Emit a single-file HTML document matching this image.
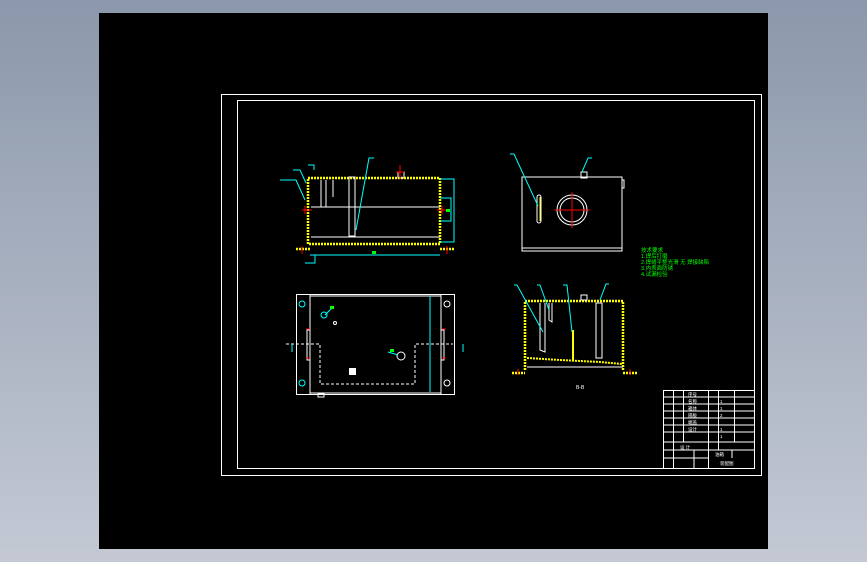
<!DOCTYPE html>
<html><head><meta charset="utf-8"><style>
html,body{margin:0;padding:0;width:867px;height:562px;overflow:hidden;background:linear-gradient(#8b98ab,#c4c9d4);}
svg{position:absolute;left:0;top:0}
text{font-family:"Liberation Sans","Noto Sans CJK SC",sans-serif;}
</style></head><body>
<svg width="867" height="562" viewBox="0 0 867 562">
<rect x="99" y="13" width="669" height="536" fill="#000"/>
<rect x="221.5" y="94.5" width="540" height="381" fill="none" stroke="#fff" stroke-width="1"/>
<rect x="237.5" y="100.5" width="517" height="368" fill="none" stroke="#fff" stroke-width="1"/>

<!-- front view -->
<g fill="none" stroke-width="1">
<rect x="308" y="178" width="132" height="66" stroke="#ff0" stroke-width="2.5" stroke-dasharray="2 1"/>
<line x1="296" y1="249" x2="310" y2="249" stroke="#ff0" stroke-width="2.5" stroke-dasharray="2 1"/>
<line x1="440" y1="249" x2="455" y2="249" stroke="#ff0" stroke-width="2.5" stroke-dasharray="2 1"/>
<line x1="311" y1="207" x2="440" y2="207" stroke="#fff"/>
<line x1="311" y1="237" x2="440" y2="237" stroke="#fff"/>
<rect x="349" y="177" width="6" height="59" stroke="#fff"/>
<line x1="321" y1="180" x2="321" y2="207" stroke="#fff"/><line x1="326" y1="180" x2="326" y2="207" stroke="#fff"/>
<line x1="333" y1="180" x2="333" y2="197" stroke="#fff"/>
<rect x="398" y="172" width="6" height="6" stroke="#fff"/>
<polyline points="440,179 454,179 454,242 440,242" stroke="#0ff"/>
<polyline points="440,198 451,198 451,221 440,221" stroke="#0ff"/>
<line x1="310" y1="255" x2="440" y2="255" stroke="#0ff"/>
<polyline points="315,255 315,263 305,263" stroke="#0ff"/>
<polyline points="280,180 296,180 305,200" stroke="#0ff"/>
<polyline points="293,170 300,170 306,183" stroke="#0ff"/>
<polyline points="374,158 369,158 356,230" stroke="#0ff"/>
<polyline points="308,165 314,165 314,170" stroke="#0ff"/>
<path d="M302 210h10M305 206v8M437 210h10M442 206v8M400 165v14M396 172h8M302 246v8M447 246v8" stroke="#f00"/>
<rect x="446" y="209" width="4" height="3" fill="#0f0" stroke="none"/>
<rect x="372" y="251" width="4" height="3" fill="#0f0" stroke="none"/>
</g>

<!-- side view -->
<g fill="none" stroke="#fff" stroke-width="1">
<rect x="522" y="177" width="100" height="74"/>
<line x1="522" y1="248" x2="622" y2="248"/>
<rect x="537" y="195" width="4" height="28" rx="2"/>
<line x1="540" y1="197" x2="540" y2="221" stroke="#ff0"/>
<circle cx="572" cy="210" r="15"/><circle cx="572" cy="210" r="12"/>
<rect x="581" y="172" width="6" height="6"/>
<rect x="622" y="180" width="2" height="8"/>
<path d="M554 210h36M572 192v36" stroke="#f00"/>
<polyline points="510,154 514,154 538,206" stroke="#0ff"/>
<polyline points="592,158 588,158 582,172" stroke="#0ff"/>
</g>
<g fill="#0f0" font-size="5.5">
<text x="641" y="252">技术要求</text>
<text x="641" y="258">1.焊后打磨</text>
<text x="641" y="264">2.焊缝平整光滑 无 焊接缺陷</text>
<text x="641" y="270">3.内表面防锈</text>
<text x="641" y="276">4.试漏检验</text>
</g>

<!-- section view -->
<g fill="none" stroke-width="1">
<polyline points="525,370 525,301 623,301 623,370" stroke="#ff0" stroke-width="2.5" stroke-dasharray="2 1"/>
<path d="M512 373h13M623 373h14" stroke="#ff0" stroke-width="2.5" stroke-dasharray="2 1"/>
<polyline points="527,358 560,360 600,362 622,364" stroke="#ff0" stroke-width="2" stroke-dasharray="2 1"/>
<line x1="527" y1="367" x2="623" y2="367" stroke="#fff"/>
<polyline points="540,303 540,350 545,352 545,303" stroke="#fff"/>
<polyline points="549,303 549,320 552,322 552,303" stroke="#fff"/>
<rect x="596" y="303" width="6" height="55" stroke="#fff"/>
<line x1="573" y1="330" x2="573" y2="361" stroke="#ff0" stroke-width="2"/>
<rect x="581" y="295" width="6" height="5" stroke="#fff"/>
<polyline points="514,285 517,285 543,332" stroke="#0ff"/>
<polyline points="537,285 540,285 549,310" stroke="#0ff"/>
<polyline points="563,285 567,285 572,332" stroke="#0ff"/>
<polyline points="609,284 606,284 600,300" stroke="#0ff"/>
<path d="M518 369v6M630 369v6" stroke="#f00"/>
<text x="576" y="389" fill="#fff" font-size="5">B-B</text>
</g>

<!-- plan view -->
<g fill="none" stroke-width="1">
<rect x="296.5" y="294.5" width="158" height="100" stroke="#fff"/>
<line x1="310" y1="295" x2="310" y2="394" stroke="#fff"/>
<line x1="441" y1="295" x2="441" y2="394" stroke="#fff"/>
<line x1="310" y1="296" x2="441" y2="296" stroke="#fff"/>
<line x1="430" y1="296" x2="430" y2="392" stroke="#0ff"/>
<line x1="310" y1="393" x2="441" y2="393" stroke="#fff"/>
<rect x="307" y="330" width="3" height="30" stroke="#fff"/>
<rect x="441" y="330" width="3" height="30" stroke="#fff"/>
<path d="M286 344h34v40h95v-40h38" stroke="#fff" stroke-dasharray="3 2"/>
<polyline points="292,352 292,344" stroke="#0ff"/><polyline points="463,344 463,352" stroke="#0ff"/>
<circle cx="302" cy="304" r="3" stroke="#0ff"/><circle cx="302" cy="383" r="3" stroke="#0ff"/>
<circle cx="447" cy="304" r="3" stroke="#fff"/><circle cx="447" cy="383" r="3" stroke="#fff"/>
<circle cx="324" cy="315" r="3" stroke="#0ff"/>
<circle cx="401" cy="356" r="4" stroke="#fff"/>
<circle cx="335" cy="323" r="1.5" stroke="#fff"/>
<rect x="349" y="368" width="7" height="7" fill="#fff" stroke="none"/>
<path d="M325 315l8-8M388 352l10 3" stroke="#0ff"/>
<path d="M306 329h4M306 358h4M442 329h4M442 358h4" stroke="#f00"/>
<rect x="318" y="394" width="6" height="3" stroke="#fff"/>
<rect x="330" y="306" width="4" height="3" fill="#0f0" stroke="none"/>
<rect x="390" y="349" width="4" height="3" fill="#0f0" stroke="none"/>
</g>

<!-- title block -->
<g fill="none" stroke="#fff" stroke-width="1">
<rect x="663.5" y="390.5" width="91" height="78"/>
<path d="M673.5 390v78M683.5 390v52M708.5 390v78M718.5 390v60M734.5 390v52"/>
<path d="M663 397h92M663 404h92M663 411h92M663 418h92M663 425h92M663 432h92M663 442h92M663 450h92M663 458h45"/>
<path d="M694 450v18M732 450v8"/>
</g>
<g fill="#fff" font-size="4.5">
<text x="688" y="396">序号</text><text x="688" y="403">名称</text><text x="688" y="410">箱体</text>
<text x="688" y="417">隔板</text><text x="688" y="424">端盖</text><text x="688" y="431">设计</text>
<text x="720" y="403">1</text><text x="720" y="410">1</text><text x="720" y="417">2</text>
<text x="720" y="431">1</text><text x="720" y="438">1</text>
<text x="680" y="449">设 计</text><text x="715" y="456">油箱</text>
<text x="720" y="465">装配图</text>
</g>
</svg>
</body></html>
